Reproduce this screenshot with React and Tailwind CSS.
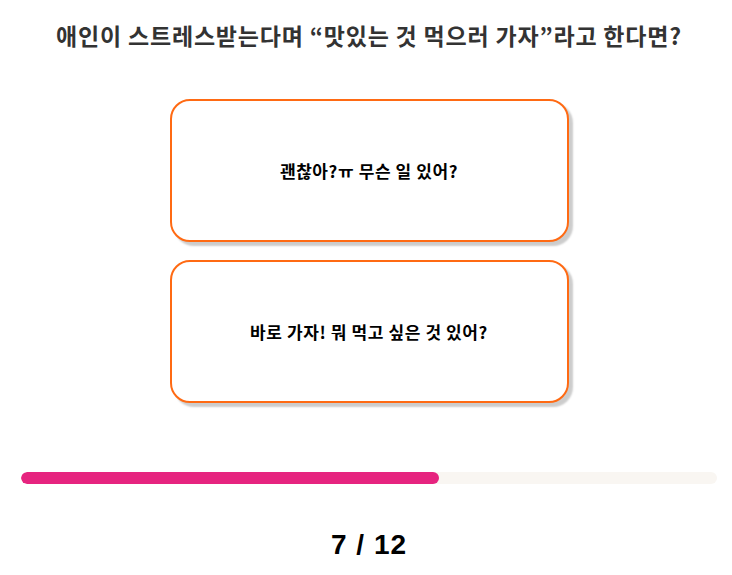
import React from "react";

export default function App() {
  const current = 7;
  const total = 12;
  return (
    <div
      className="w-[732px] h-[575px] bg-white flex flex-col items-center pl-[21px] pr-[15px]"
      style={{ fontFamily: '"Noto Sans CJK KR", "Noto Sans", sans-serif' }}
    >
      <h1 className="mt-[20px] text-[23px] leading-[30px] tracking-[0.8px] font-bold text-[#333333] whitespace-nowrap">
        애인이 스트레스받는다며 “맛있는 것 먹으러 가자”라고 한다면?
      </h1>
      <div className="mt-[49px] flex flex-col gap-[18px]">
        {["괜찮아?ㅠ 무슨 일 있어?", "바로 가자! 뭐 먹고 싶은 것 있어?"].map((t) => (
          <button
            key={t}
            className="w-[399px] h-[143px] bg-white border-2 border-[#ff6a13] rounded-[20px] shadow-[4px_4px_2px_rgba(0,0,0,0.2)] flex items-center justify-center text-[17px] tracking-[0.6px] font-bold text-black"
          >
            {t}
          </button>
        ))}
      </div>
      <div className="mt-[69px] w-full h-[12px] rounded-full bg-[#f9f6f2] overflow-hidden">
        <div className="h-full rounded-full bg-[#e6247f]" style={{ width: "60%" }} />
      </div>
      <div
        className="mt-[47px] text-[28px] tracking-[1px] font-bold text-black leading-none"
        style={{ fontFamily: '"Liberation Sans", Arial, sans-serif' }}
      >
        {current} / {total}
      </div>
    </div>
  );
}
